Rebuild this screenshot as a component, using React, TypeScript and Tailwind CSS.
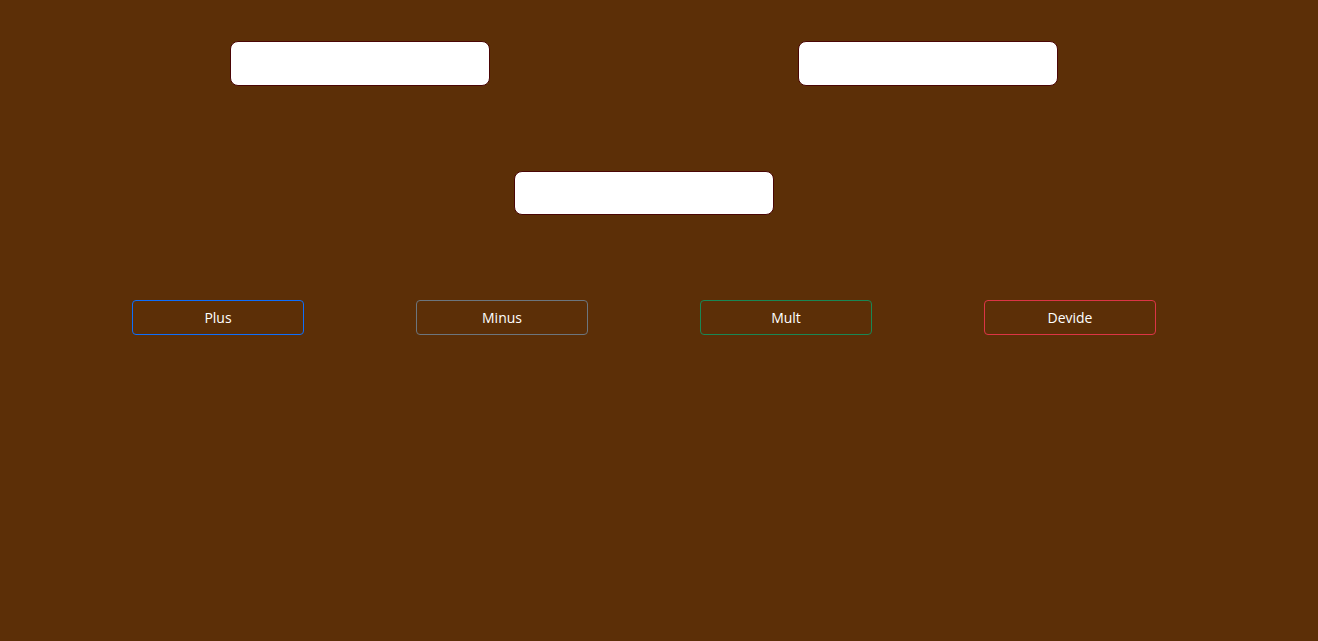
import { useState } from 'react'

const buttons = [
  { label: 'Plus', cls: 'border-[#0d6efd]' },
  { label: 'Minus', cls: 'border-[#6c757d]' },
  { label: 'Mult', cls: 'border-[#198754]' },
  { label: 'Devide', cls: 'border-[#dc3545]' },
]

export default function App() {
  const [a, setA] = useState('')
  const [b, setB] = useState('')
  const [result, setResult] = useState('')

  const calc = (op: string) => {
    const x = parseFloat(a)
    const y = parseFloat(b)
    if (isNaN(x) || isNaN(y)) return
    if (op === 'Plus') setResult(String(x + y))
    if (op === 'Minus') setResult(String(x - y))
    if (op === 'Mult') setResult(String(x * y))
    if (op === 'Devide') setResult(String(x / y))
  }

  return (
    <div className="min-h-screen bg-[#5c2f07] font-['Open_Sans','Noto_Sans',sans-serif] text-white">
      <div className="ml-[76px] w-[1136px] pt-[41px]">
        <div className="grid grid-cols-2">
          <div className="flex justify-center">
            <input
              value={a}
              onChange={e => setA(e.target.value)}
              className="h-[45px] w-[260px] rounded-lg border border-[#4a0505] bg-white px-3 text-black outline-none"
            />
          </div>
          <div className="flex justify-center">
            <input
              value={b}
              onChange={e => setB(e.target.value)}
              className="h-[45px] w-[260px] rounded-lg border border-[#4a0505] bg-white px-3 text-black outline-none"
            />
          </div>
        </div>
        <div className="mt-[85px] flex justify-center">
          <input
            value={result}
            readOnly
            className="h-[44px] w-[260px] rounded-lg border border-[#4a0505] bg-white px-3 text-black outline-none"
          />
        </div>
        <div className="mt-[85px] grid grid-cols-4">
          {buttons.map(btn => (
            <div key={btn.label} className="flex justify-center">
              <button
                onClick={() => calc(btn.label)}
                className={`h-[35px] w-[172px] rounded border ${btn.cls} text-[14px] text-white`}
              >
                {btn.label}
              </button>
            </div>
          ))}
        </div>
      </div>
    </div>
  )
}
